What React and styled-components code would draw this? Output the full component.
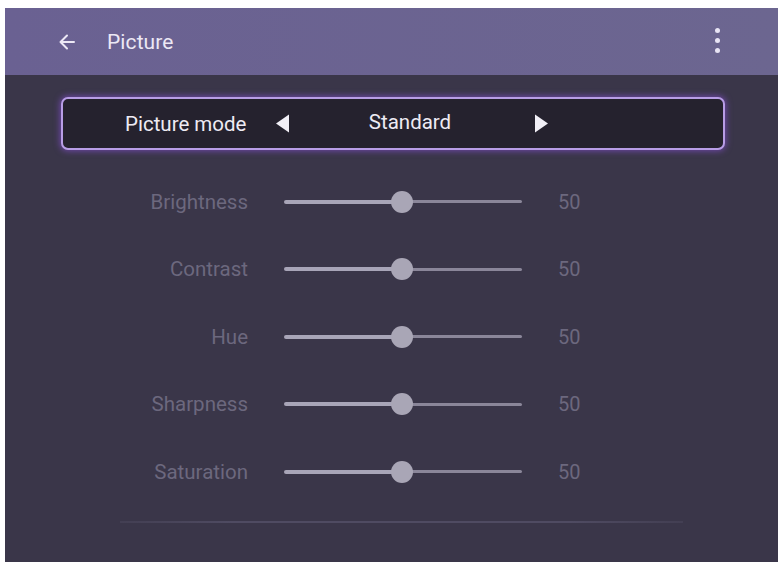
import React from "react";
import styled, { createGlobalStyle } from "styled-components";

const Global = createGlobalStyle`
  html, body { margin: 0; padding: 0; background: #ffffff; }
  body { font-family: Roboto, "Noto Sans", "Liberation Sans", sans-serif; }
`;

const Page = styled.div`
  width: 781px;
  height: 565px;
  box-sizing: border-box;
  padding: 8px 3px 3px 5px;
`;

const Screen = styled.div`
  width: 773px;
  height: 554px;
  display: flex;
  flex-direction: column;
  background: #3a3649;
  overflow: hidden;
`;

const Header = styled.header`
  height: 67px;
  flex: none;
  display: flex;
  align-items: center;
  padding: 0 58px 0 52px;
  background: linear-gradient(to right, #6a6192, #6c6690);
  color: #ece8f5;
`;

const BackButton = styled.span`
  display: flex;
  width: 20px;
  height: 20px;
  margin-right: 30px;
`;

const Title = styled.h1`
  margin: 0;
  flex: 1;
  font-size: 21px;
  font-weight: 400;
  letter-spacing: 0.1px;
`;

const Kebab = styled.span`
  display: flex;
  flex-direction: column;
  gap: 5px;
  margin-top: -2px;
`;

const Dot = styled.i`
  width: 5px;
  height: 5px;
  border-radius: 50%;
  background: #e8e4f4;
`;

const Body = styled.main`
  flex: 1;
  display: flex;
  flex-direction: column;
  padding: 22px 53px 0 56px;
`;

const ModeBox = styled.div`
  height: 53px;
  box-sizing: border-box;
  display: flex;
  align-items: center;
  padding-left: 62px;
  border: 2px solid #b89de6;
  border-radius: 7px;
  background: #25222e;
  box-shadow: 0 0 6px 1px rgba(128, 78, 200, 0.75);
  color: #eeebf4;
  font-size: 20.5px;
`;

const ModeLabel = styled.span`
  width: 150px;
`;

const ModeValue = styled.span`
  width: 244px;
  box-sizing: border-box;
  text-align: center;
  padding: 0 4px 3px 0;
`;

const Arrow = styled.svg`
  width: 15px;
  height: 19px;
  fill: #f2f0f7;
`;

const Rows = styled.div`
  margin: 18px 0 0 -56px;
  display: flex;
  flex-direction: column;
`;

const Row = styled.div`
  height: 67.5px;
  display: grid;
  grid-template-columns: 243px 238px auto;
  column-gap: 36px;
  align-items: center;
  color: #6c687e;
  font-size: 20.5px;
`;

const Label = styled.span`
  text-align: right;
`;

const Track = styled.div`
  position: relative;
  height: 22px;
  display: flex;
  align-items: center;
`;

const Filled = styled.div`
  height: 4px;
  border-radius: 2px;
  background: #a8a5b8;
`;

const Rest = styled.div`
  flex: 1;
  height: 3px;
  border-radius: 2px;
  background: #8a8699;
`;

const Thumb = styled.div`
  position: absolute;
  top: 0;
  width: 22px;
  height: 22px;
  margin-left: -11px;
  border-radius: 50%;
  background: #a9a6b6;
`;

const Value = styled.span`
  font-size: 20px;
`;

const Divider = styled.hr`
  margin: 15px 42px 0 59px;
  border: none;
  height: 2px;
  background: linear-gradient(to right, rgba(80, 76, 98, 0.4), #4f4b62 20%, #4f4b62 80%, rgba(80, 76, 98, 0.4));
`;

const settings = [
  { name: "Brightness", value: 50 },
  { name: "Contrast", value: 50 },
  { name: "Hue", value: 50 },
  { name: "Sharpness", value: 50 },
  { name: "Saturation", value: 50 },
];

function Slider({ value }) {
  const pos = 118 + (value - 50) * 2.38;
  return (
    <Track>
      <Filled style={{ width: pos }} />
      <Rest />
      <Thumb style={{ left: pos }} />
    </Track>
  );
}

export default function App() {
  return (
    <Page>
      <Global />
      <Screen>
        <Header>
          <BackButton>
            <svg width="20" height="20" viewBox="0 0 20 20" fill="none" stroke="#ece8f5" strokeWidth="2" strokeLinecap="round" strokeLinejoin="round">
              <path d="M17 10H3.5M10 3.5 3.5 10l6.5 6.5" />
            </svg>
          </BackButton>
          <Title>Picture</Title>
          <Kebab>
            <Dot />
            <Dot />
            <Dot />
          </Kebab>
        </Header>
        <Body>
          <ModeBox>
            <ModeLabel>Picture mode</ModeLabel>
            <Arrow viewBox="0 0 15 19">
              <path d="M14 0.5V18.5L1 9.5Z" />
            </Arrow>
            <ModeValue>Standard</ModeValue>
            <Arrow viewBox="0 0 15 19">
              <path d="M1 0.5V18.5L14 9.5Z" />
            </Arrow>
          </ModeBox>
          <Rows>
            {settings.map((s) => (
              <Row key={s.name}>
                <Label>{s.name}</Label>
                <Slider value={s.value} />
                <Value>{s.value}</Value>
              </Row>
            ))}
          </Rows>
          <Divider />
        </Body>
      </Screen>
    </Page>
  );
}
